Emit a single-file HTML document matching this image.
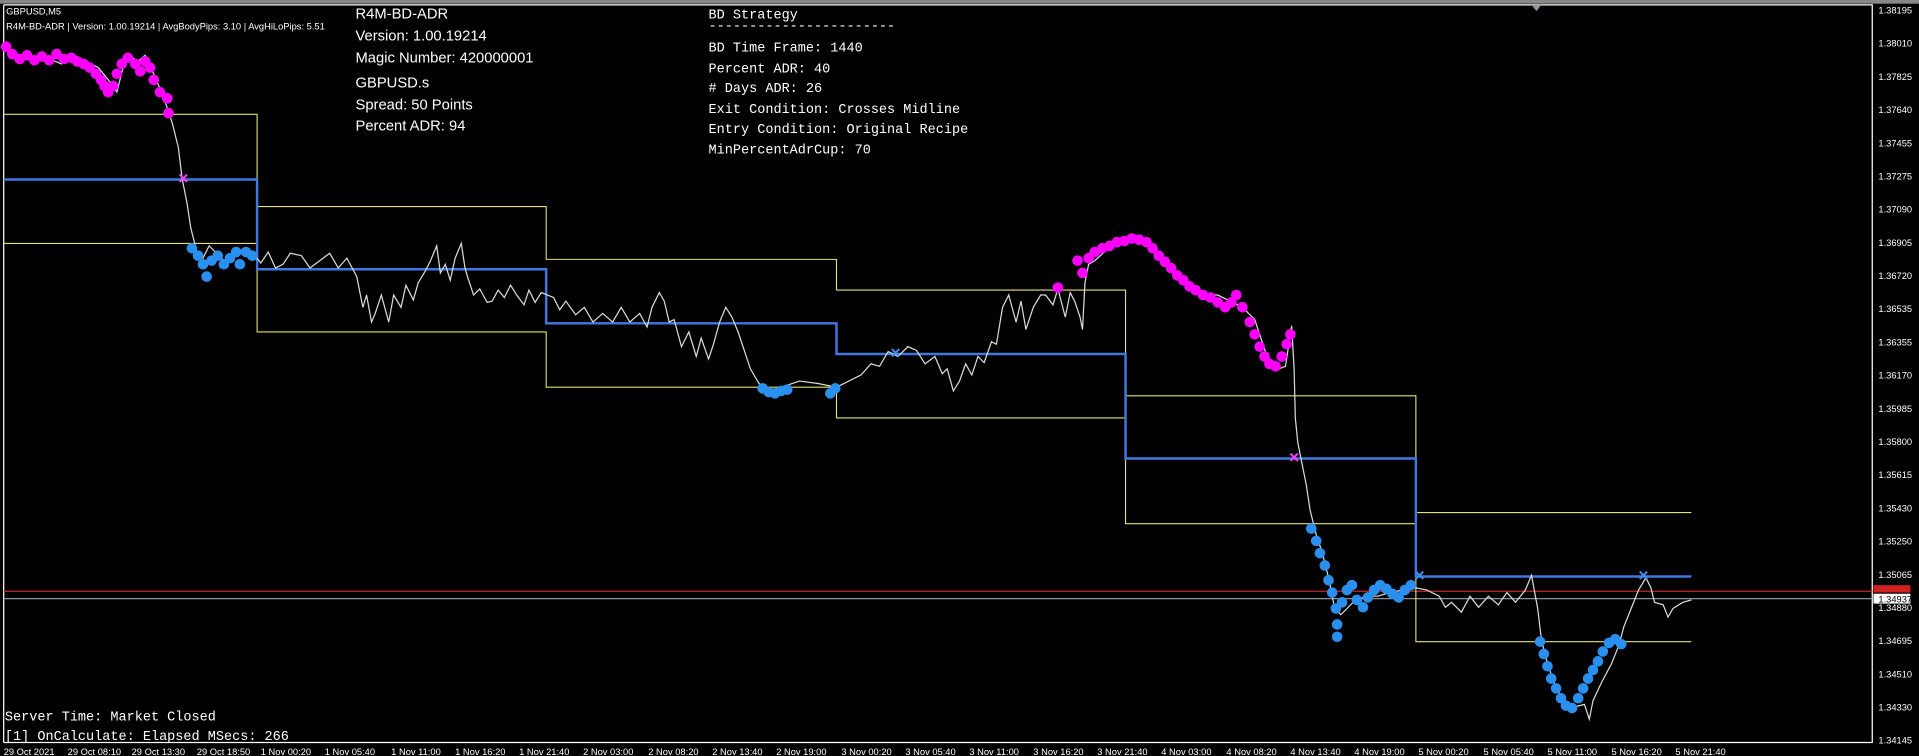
<!DOCTYPE html><html><head><meta charset="utf-8"><style>
html,body{margin:0;padding:0;background:#000;width:1919px;height:756px;overflow:hidden}
svg{display:block}
.s{font-family:"Liberation Sans",sans-serif;fill:#fff}
.m{font-family:"Liberation Mono",monospace;fill:#fff;font-size:11px}
.ax{font-family:"Liberation Sans",sans-serif;fill:#fff;font-size:7.6px}
</style></head><body>
<svg width="1919" height="756" viewBox="0 0 1560 615" preserveAspectRatio="none" xmlns="http://www.w3.org/2000/svg">
<rect width="1560" height="615" fill="#000"/>
<rect x="0" y="0" width="1560" height="3" fill="#888"/>
<polyline points="3,4 1522,4 1522,604 3,604" fill="none" stroke="#fff" stroke-width="1"/>
<line x1="3" y1="4" x2="3" y2="604" stroke="#fff"/>
<path d="M1245,4 l8,0 l-4,5z" fill="#8a9aa8"/>
<line x1="3" y1="481" x2="1522" y2="481" stroke="#c0282a" stroke-width="1"/>
<line x1="3" y1="487" x2="1522" y2="487" stroke="#8a95a0" stroke-width="1"/>
<rect x="1523" y="476" width="30" height="6" fill="#d02020"/>
<rect x="1523" y="483" width="30" height="8" fill="#fff"/>
<text x="1527" y="490" style="font-family:'Liberation Sans',sans-serif;font-size:7.6px" fill="#000">1.34937</text>
<g fill="none" stroke="#e8e070" stroke-width="0.9">
<polyline points="3,93 209,93 209,168 444,168 444,211 680,211 680,236 915,236 915,322 1151,322 1151,417 1375,417"/>
<polyline points="3,198 209,198 209,270 444,270 444,315 680,315 680,340 915,340 915,426 1151,426 1151,522 1375,522"/>
</g>
<polyline points="3,146 209,146 209,219 444,219 444,263 680,263 680,288 915,288 915,373 1151,373 1151,469 1375,469" fill="none" stroke="#3f78e0" stroke-width="2"/>
<polyline fill="none" stroke="#d8dcdc" stroke-width="1" points="3,38 12,44 20,45 30,50 40,48 50,52 60,45 70,50 80,55 88,65 95,75 100,55 105,45 112,50 118,45 122,55 125,60 130,72 135,85 140,100 145,120 148,145 152,165 155,185 160,205 165,210 170,200 175,205 182,212 190,208 198,202 205,205 212,214 218,205 224,218 230,215 236,206 245,208 252,218 260,212 268,206 275,218 282,210 290,225 295,250 298,240 302,262 305,255 310,240 316,262 320,240 326,250 330,232 336,244 340,230 346,220 350,212 355,200 358,222 362,215 366,228 370,210 375,198 378,218 380,225 385,240 390,235 396,246 400,245 405,236 410,242 415,232 420,240 426,248 430,236 435,246 440,238 450,242 455,252 460,245 468,256 475,250 482,262 490,255 498,262 505,250 512,262 520,255 526,266 530,250 536,238 540,245 544,262 548,260 554,282 560,270 566,290 570,275 576,292 580,280 585,262 590,250 595,258 600,270 605,285 610,300 617,312 625,318 635,315 650,310 665,312 680,315 690,310 700,305 708,296 715,298 722,286 730,290 738,282 745,285 752,296 760,290 766,304 770,300 775,318 780,310 785,296 790,305 795,290 800,295 806,278 810,280 815,250 820,240 826,262 830,245 834,268 840,250 846,240 850,240 856,248 860,235 866,258 870,238 874,246 878,258 880,268 882,230 885,215 890,212 900,203 910,195 920,193 930,195 940,205 950,215 960,225 970,235 980,240 990,240 1000,245 1010,250 1020,260 1030,290 1040,300 1045,298 1050,265 1052,300 1053,340 1055,360 1058,375 1062,395 1065,415 1070,435 1075,450 1080,470 1085,495 1090,500 1100,490 1110,485 1120,485 1130,482 1140,480 1150,478 1160,480 1170,485 1175,494 1180,490 1188,498 1195,485 1202,494 1210,485 1218,492 1225,482 1232,490 1240,480 1245,468 1250,495 1253,520 1258,540 1265,560 1272,570 1280,575 1288,573 1292,585 1295,570 1302,555 1310,540 1316,525 1320,510 1326,495 1332,480 1338,470 1342,478 1345,490 1352,492 1356,502 1360,495 1368,490 1375,488"/>
<g fill="#ff00ff">
<circle cx="5" cy="38" r="4.3"/><circle cx="10" cy="44" r="4.3"/><circle cx="16" cy="48" r="4.3"/><circle cx="22" cy="45" r="4.3"/><circle cx="28" cy="49" r="4.3"/><circle cx="34" cy="46" r="4.3"/><circle cx="40" cy="49" r="4.3"/><circle cx="46" cy="44" r="4.3"/><circle cx="52" cy="48" r="4.3"/><circle cx="58" cy="47" r="4.3"/><circle cx="63" cy="50" r="4.3"/><circle cx="68" cy="52" r="4.3"/><circle cx="73" cy="55" r="4.3"/><circle cx="78" cy="60" r="4.3"/><circle cx="82" cy="65" r="4.3"/><circle cx="85" cy="70" r="4.3"/><circle cx="88" cy="75" r="4.3"/><circle cx="92" cy="70" r="4.3"/><circle cx="95" cy="60" r="4.3"/><circle cx="99" cy="52" r="4.3"/><circle cx="104" cy="47" r="4.3"/><circle cx="110" cy="52" r="4.3"/><circle cx="114" cy="58" r="4.3"/><circle cx="118" cy="50" r="4.3"/><circle cx="122" cy="55" r="4.3"/><circle cx="125" cy="65" r="4.3"/><circle cx="130" cy="75" r="4.3"/><circle cx="136" cy="80" r="4.3"/><circle cx="137" cy="92" r="4.3"/>
<circle cx="876" cy="212" r="4.3"/><circle cx="880" cy="222" r="4.3"/><circle cx="885" cy="210" r="4.3"/><circle cx="890" cy="205" r="4.3"/><circle cx="896" cy="202" r="4.3"/><circle cx="902" cy="200" r="4.3"/><circle cx="908" cy="197" r="4.3"/><circle cx="914" cy="196" r="4.3"/><circle cx="920" cy="194" r="4.3"/><circle cx="926" cy="195" r="4.3"/><circle cx="932" cy="197" r="4.3"/><circle cx="937" cy="202" r="4.3"/><circle cx="942" cy="208" r="4.3"/><circle cx="947" cy="213" r="4.3"/><circle cx="952" cy="218" r="4.3"/><circle cx="957" cy="224" r="4.3"/><circle cx="962" cy="228" r="4.3"/><circle cx="967" cy="233" r="4.3"/><circle cx="972" cy="236" r="4.3"/><circle cx="978" cy="240" r="4.3"/><circle cx="984" cy="242" r="4.3"/><circle cx="990" cy="246" r="4.3"/><circle cx="996" cy="250" r="4.3"/><circle cx="1001" cy="246" r="4.3"/><circle cx="1005" cy="240" r="4.3"/><circle cx="1010" cy="250" r="4.3"/><circle cx="1016" cy="262" r="4.3"/><circle cx="1020" cy="272" r="4.3"/><circle cx="1024" cy="282" r="4.3"/><circle cx="1028" cy="290" r="4.3"/><circle cx="1032" cy="296" r="4.3"/><circle cx="1037" cy="298" r="4.3"/><circle cx="1042" cy="290" r="4.3"/><circle cx="1046" cy="280" r="4.3"/><circle cx="1049" cy="272" r="4.3"/><circle cx="860" cy="234" r="4.3"/>
</g>
<g fill="#2a90f0">
<circle cx="156" cy="202" r="4.3"/><circle cx="161" cy="208" r="4.3"/><circle cx="165" cy="215" r="4.3"/><circle cx="168" cy="225" r="4.3"/><circle cx="172" cy="212" r="4.3"/><circle cx="177" cy="208" r="4.3"/><circle cx="182" cy="215" r="4.3"/><circle cx="187" cy="210" r="4.3"/><circle cx="192" cy="205" r="4.3"/><circle cx="195" cy="215" r="4.3"/><circle cx="200" cy="205" r="4.3"/><circle cx="205" cy="208" r="4.3"/>
<circle cx="620" cy="316" r="4.3"/><circle cx="625" cy="319" r="4.3"/><circle cx="630" cy="320" r="4.3"/><circle cx="635" cy="318" r="4.3"/><circle cx="640" cy="317" r="4.3"/><circle cx="675" cy="320" r="4.3"/><circle cx="679" cy="316" r="4.3"/>
<circle cx="1066" cy="430" r="4.3"/><circle cx="1070" cy="440" r="4.3"/><circle cx="1073" cy="450" r="4.3"/><circle cx="1077" cy="460" r="4.3"/><circle cx="1080" cy="472" r="4.3"/><circle cx="1083" cy="482" r="4.3"/><circle cx="1086" cy="495" r="4.3"/><circle cx="1087" cy="508" r="4.3"/><circle cx="1087" cy="518" r="4.3"/><circle cx="1091" cy="490" r="4.3"/><circle cx="1095" cy="480" r="4.3"/><circle cx="1099" cy="476" r="4.3"/><circle cx="1103" cy="488" r="4.3"/><circle cx="1108" cy="494" r="4.3"/><circle cx="1112" cy="486" r="4.3"/><circle cx="1117" cy="480" r="4.3"/><circle cx="1122" cy="476" r="4.3"/><circle cx="1127" cy="479" r="4.3"/><circle cx="1132" cy="483" r="4.3"/><circle cx="1137" cy="486" r="4.3"/><circle cx="1142" cy="480" r="4.3"/><circle cx="1147" cy="476" r="4.3"/>
<circle cx="1252" cy="522" r="4.3"/><circle cx="1255" cy="532" r="4.3"/><circle cx="1258" cy="542" r="4.3"/><circle cx="1261" cy="552" r="4.3"/><circle cx="1265" cy="560" r="4.3"/><circle cx="1269" cy="568" r="4.3"/><circle cx="1273" cy="574" r="4.3"/><circle cx="1278" cy="576" r="4.3"/><circle cx="1283" cy="568" r="4.3"/><circle cx="1287" cy="560" r="4.3"/><circle cx="1291" cy="552" r="4.3"/><circle cx="1295" cy="545" r="4.3"/><circle cx="1299" cy="538" r="4.3"/><circle cx="1303" cy="530" r="4.3"/><circle cx="1308" cy="523" r="4.3"/><circle cx="1313" cy="520" r="4.3"/><circle cx="1318" cy="524" r="4.3"/>
</g>
<g stroke-width="1.6" fill="none">
<path d="M146,142 l6,6 M152,142 l-6,6" stroke="#ff40ff"/>
<path d="M1049,369 l6,6 M1055,369 l-6,6" stroke="#ff40ff"/>
<path d="M725,284 l6,6 M731,284 l-6,6" stroke="#3f90f0"/>
<path d="M1151,465 l6,6 M1157,465 l-6,6" stroke="#3f90f0"/>
<path d="M1333,465 l6,6 M1339,465 l-6,6" stroke="#3f90f0"/>
</g>
<text class="s" x="5" y="12" font-size="7.6">GBPUSD,M5</text>
<text class="s" x="5" y="24" font-size="7.6">R4M-BD-ADR | Version: 1.00.19214 | AvgBodyPips: 3.10 | AvgHiLoPips: 5.51</text>
<text class="s" x="289" y="15" font-size="12">R4M-BD-ADR</text>
<text class="s" x="289" y="33" font-size="12">Version: 1.00.19214</text>
<text class="s" x="289" y="51" font-size="12">Magic Number: 420000001</text>
<text class="s" x="289" y="71" font-size="12">GBPUSD.s</text>
<text class="s" x="289" y="89" font-size="12">Spread: 50 Points</text>
<text class="s" x="289" y="106" font-size="12">Percent ADR: 94</text>
<text class="m" x="576" y="15">BD Strategy</text>
<text class="m" x="576" y="24">-----------------------</text>
<text class="m" x="576" y="42">BD Time Frame: 1440</text>
<text class="m" x="576" y="59">Percent ADR: 40</text>
<text class="m" x="576" y="75"># Days ADR: 26</text>
<text class="m" x="576" y="92">Exit Condition: Crosses Midline</text>
<text class="m" x="576" y="108">Entry Condition: Original Recipe</text>
<text class="m" x="576" y="125">MinPercentAdrCup: 70</text>
<text class="m" x="4" y="586">Server Time: Market Closed</text>
<text class="m" x="4" y="602">[1] OnCalculate: Elapsed MSecs: 266</text>
<g class="ax">
<text x="1527" y="11">1.38195</text><text x="1527" y="38">1.38010</text><text x="1527" y="65">1.37825</text><text x="1527" y="92">1.37640</text><text x="1527" y="119">1.37455</text><text x="1527" y="146">1.37275</text><text x="1527" y="173">1.37090</text><text x="1527" y="200">1.36905</text><text x="1527" y="227">1.36720</text><text x="1527" y="254">1.36535</text><text x="1527" y="281">1.36355</text><text x="1527" y="308">1.36170</text><text x="1527" y="335">1.35985</text><text x="1527" y="362">1.35800</text><text x="1527" y="389">1.35615</text><text x="1527" y="416">1.35430</text><text x="1527" y="443">1.35250</text><text x="1527" y="470">1.35065</text><text x="1527" y="497">1.34880</text><text x="1527" y="524">1.34695</text><text x="1527" y="551">1.34510</text><text x="1527" y="578">1.34330</text><text x="1527" y="605">1.34145</text>
</g>
<g class="ax">
<text x="3" y="614">29 Oct 2021</text><text x="55" y="614">29 Oct 08:10</text><text x="107" y="614">29 Oct 13:30</text><text x="160" y="614">29 Oct 18:50</text><text x="212" y="614">1 Nov 00:20</text><text x="264" y="614">1 Nov 05:40</text><text x="318" y="614">1 Nov 11:00</text><text x="370" y="614">1 Nov 16:20</text><text x="422" y="614">1 Nov 21:40</text><text x="474" y="614">2 Nov 03:00</text><text x="527" y="614">2 Nov 08:20</text><text x="579" y="614">2 Nov 13:40</text><text x="631" y="614">2 Nov 19:00</text><text x="684" y="614">3 Nov 00:20</text><text x="736" y="614">3 Nov 05:40</text><text x="788" y="614">3 Nov 11:00</text><text x="840" y="614">3 Nov 16:20</text><text x="892" y="614">3 Nov 21:40</text><text x="944" y="614">4 Nov 03:00</text><text x="997" y="614">4 Nov 08:20</text><text x="1049" y="614">4 Nov 13:40</text><text x="1101" y="614">4 Nov 19:00</text><text x="1153" y="614">5 Nov 00:20</text><text x="1206" y="614">5 Nov 05:40</text><text x="1258" y="614">5 Nov 11:00</text><text x="1310" y="614">5 Nov 16:20</text><text x="1362" y="614">5 Nov 21:40</text>
</g>
</svg>
</body></html>
